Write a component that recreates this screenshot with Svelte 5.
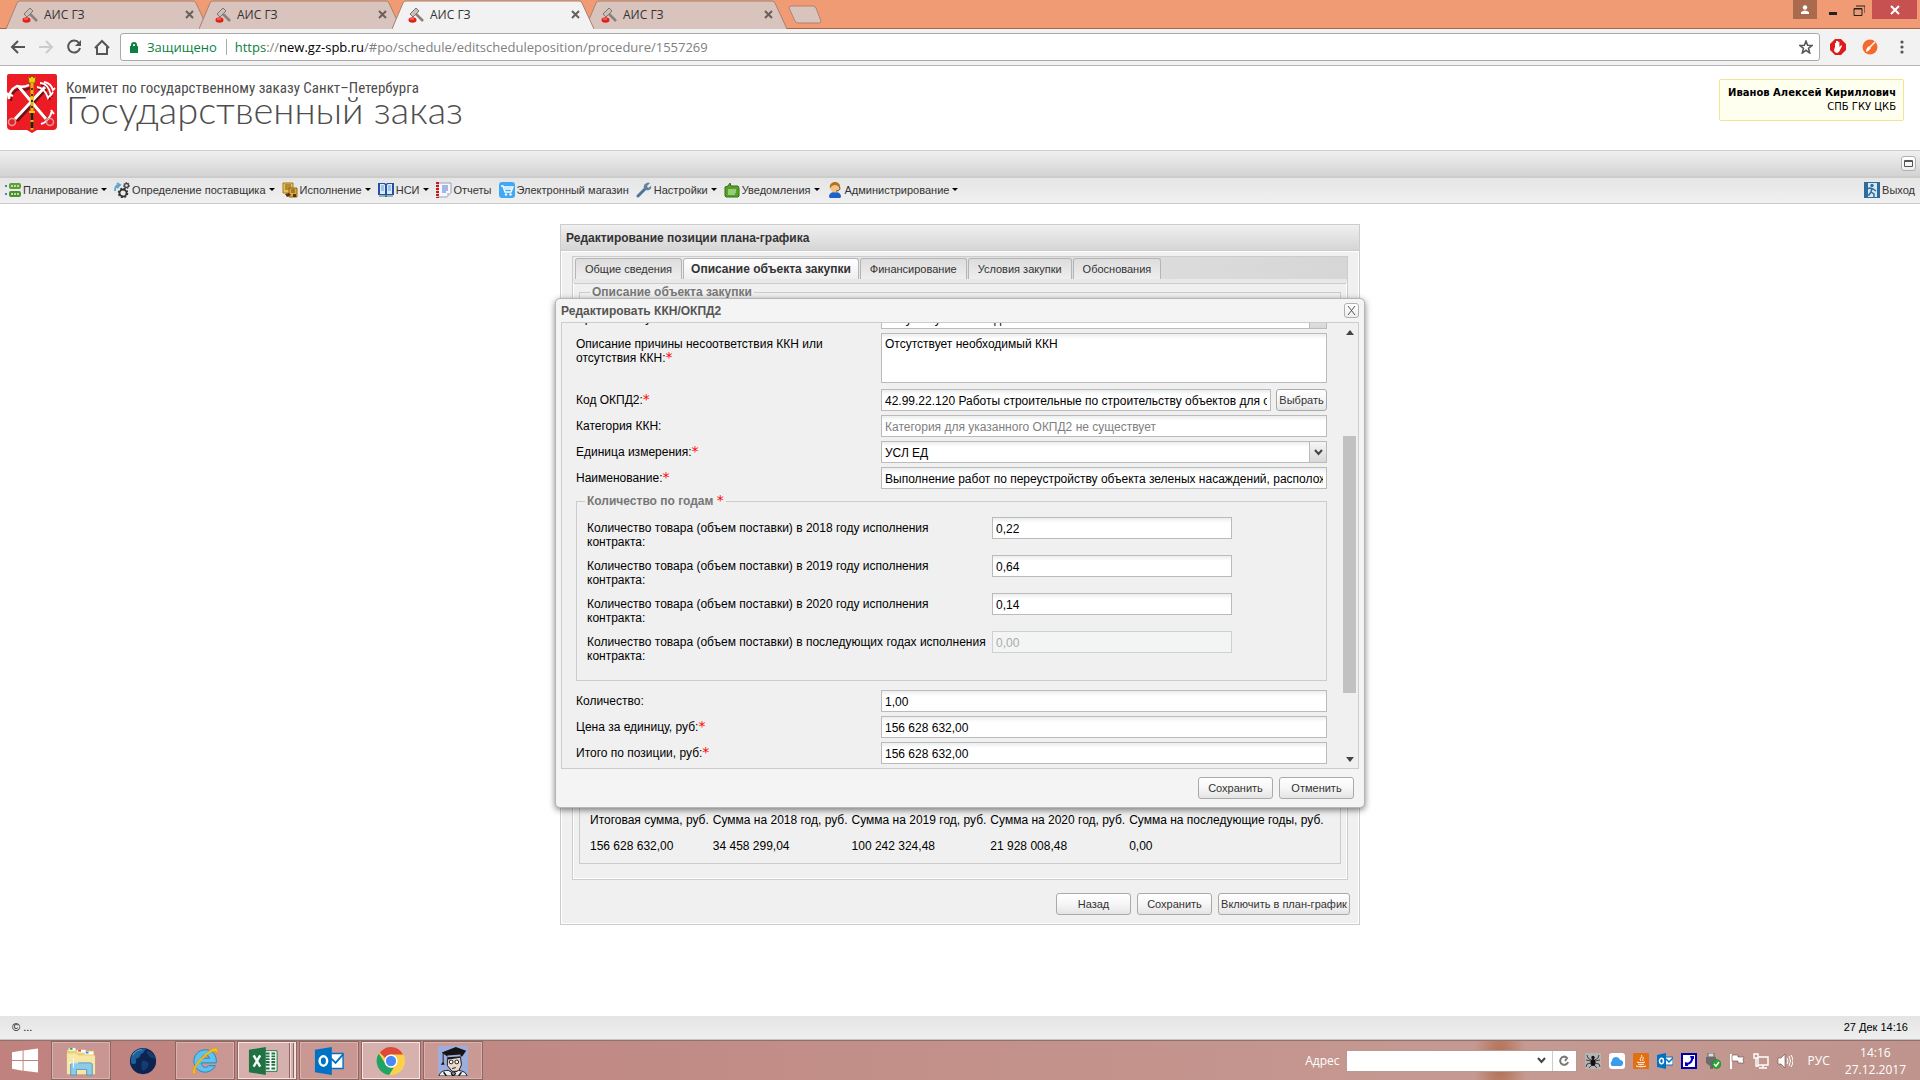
<script>
  const browserTabs = [
    { title: "АИС ГЗ", active: false },
    { title: "АИС ГЗ", active: false },
    { title: "АИС ГЗ", active: true },
    { title: "АИС ГЗ", active: false },
  ];

  const menu = [
    { icon: "plan", label: "Планирование", caret: true },
    { icon: "gears", label: "Определение поставщика", caret: true },
    { icon: "notes", label: "Исполнение", caret: true },
    { icon: "book", label: "НСИ", caret: true },
    { icon: "report", label: "Отчеты", caret: false },
    { icon: "cart", label: "Электронный магазин", caret: false },
    { icon: "wrench", label: "Настройки", caret: true },
    { icon: "mail", label: "Уведомления", caret: true },
    { icon: "person", label: "Администрирование", caret: true },
  ];

  const formTabs = [
    "Общие сведения",
    "Описание объекта закупки",
    "Финансирование",
    "Условия закупки",
    "Обоснования",
  ];
  let activeTab = $state(1);

  const totals = [
    { name: "Итоговая сумма, руб.", value: "156 628 632,00" },
    { name: "Сумма на 2018 год, руб.", value: "34 458 299,04" },
    { name: "Сумма на 2019 год, руб.", value: "100 242 324,48" },
    { name: "Сумма на 2020 год, руб.", value: "21 928 008,48" },
    { name: "Сумма на последующие годы, руб.", value: "0,00" },
  ];

  let years = $state([
    { id: "y2018", period: "в 2018 году", value: "0,22", disabled: false },
    { id: "y2019", period: "в 2019 году", value: "0,64", disabled: false },
    { id: "y2020", period: "в 2020 году", value: "0,14", disabled: false },
    { id: "yNext", period: "в последующих годах", value: "0,00", disabled: true },
  ]);

  let form = $state({
    mismatch: "Отсутствует необходимый ККН",
    okpd: "42.99.22.120 Работы строительные по строительству объектов для отдыха",
    name: "Выполнение работ по переустройству объекта зеленых насаждений, расположенного по адресу",
    count: "1,00",
    price: "156 628 632,00",
    total: "156 628 632,00",
  });

  const apps = ["explorer", "globe", "ie", "excel", "outlook", "chrome", "scholar"];
  const tray = ["spider", "cloud", "java", "mailbox", "phone", "usb", "flag", "network", "sound"];
</script>

{#snippet menuIcon(name)}
  <svg class="ico" viewBox="0 0 16 16" aria-hidden="true">
    {#if name === "plan"}
      <rect x="4" y="1" width="12" height="6" rx="2" fill="#5a9e3e" />
      <rect x="4" y="9" width="12" height="6" rx="2" fill="#4a8f33" />
      <path d="M6 4h2m1 0h2m1 0h2M6 12h2m1 0h2m1 0h2" stroke="#b9e29f" stroke-width="2" />
      <path d="M0 4h2M0 12h2" stroke="#4a7fae" stroke-width="2" />
    {:else if name === "gears"}
      <circle cx="9" cy="11" r="3.500" fill="none" stroke="#333" stroke-width="1.800" />
      <circle cx="9" cy="11" r="4.700" fill="none" stroke="#333" stroke-width="1.200" stroke-dasharray="2 1.700" />
      <circle cx="12.500" cy="3.500" r="2" fill="none" stroke="#444" stroke-width="1.300" />
      <circle cx="12.500" cy="3.500" r="3" fill="none" stroke="#444" stroke-width="1" stroke-dasharray="1.300 1.300" />
      <path d="M1 9c0-4 1-6 4-6M3 1l3 2-3 3" fill="none" stroke="#5ba7cf" stroke-width="1.800" />
    {:else if name === "notes"}
      <path d="M1 1h10v10H1z" fill="#e7bf52" stroke="#a67b20" />
      <path d="M3 3h6M3 5h6M3 7h5" stroke="#7c5a17" />
      <path d="M7 6h8v9H7z" fill="#dca93e" stroke="#8c6418" />
      <path d="M9 8h4M9 10h4" stroke="#6b4a12" />
      <path d="M3 12l4-1 2 2-4 2zM11 12h3v3h-3z" fill="#5a3210" />
    {:else if name === "book"}
      <path d="M0 1h7l1 1 1-1h7v12H9l-1 2-1-2H0z" fill="#2b4fa0" />
      <path d="M2 2h4l1 1v9H2zM14 2h-4L9 3v9h5z" fill="#d9ebff" />
      <path d="M3 4h3M3 6h3M3 8h3M10 4h3M10 6h3M10 8h3" stroke="#6d97cf" />
      <path d="M1 14h6l1 1 1-1h6" fill="none" stroke="#2d8078" />
    {:else if name === "report"}
      <path d="M2 1h13v10l-4 4H2z" fill="#f4f7ff" stroke="#9aa0b4" />
      <path d="M1.500 0v16" stroke="#cf1515" stroke-width="3" stroke-dasharray="2 1" />
      <path d="M6 4h6M6 6h6M6 8h6M6 10h4" stroke="#5577c5" />
      <path d="M11 15v-4h4z" fill="#c6cde2" />
    {:else if name === "cart"}
      <rect width="16" height="16" rx="3" fill="#3fa9f5" />
      <path d="M2 4h2l2 6h6l2-5H5M6 7h7" fill="none" stroke="#fff" stroke-width="1.400" />
      <circle cx="7" cy="12.500" r="1.200" fill="#fff" /><circle cx="11.500" cy="12.500" r="1.200" fill="#fff" />
    {:else if name === "wrench"}
      <path d="M2 14l8-8" stroke="#4f7595" stroke-width="3" stroke-linecap="round" />
      <path d="M14 1l-3 3 1 2 3-2c1 3-2 5-5 4L8 6c-1-3 2-6 6-5z" fill="#5e84a4" />
    {:else if name === "mail"}
      <path d="M1 5l3-1 2-3 1 3h7l1 2v8l-1 1H2l-1-1z" fill="#57a12b" stroke="#2f7312" />
      <path d="M4 8h8M4 10h8M4 12h7" stroke="#def3cf" />
    {:else}
      <path d="M2 15c0-4 3-5 6-5s6 1 6 5l-1 1H3z" fill="#1d62c9" />
      <circle cx="8" cy="6" r="4.500" fill="#f3c384" />
      <path d="M3 7C2 2 5 0 8 0s6 2 5 7c-1-3-3-4-5-4S4 4 3 7z" fill="#b4701d" />
      <path d="M12 5c2 1 1 4-3 4" fill="none" stroke="#555" />
    {/if}
  </svg>
{/snippet}

{#snippet appIcon(name)}
  <svg class="app-ico" viewBox="0 0 32 32" aria-hidden="true">
    {#if name === "explorer"}
      <path d="M1 5l2-2h7l2 2h18v24H1z" fill="#e9cf76" />
      <path d="M3 2h7v3H3z" fill="#fff" /><path d="M4 2h3v2H4z" fill="#3ca94b" />
      <path d="M12 4h9v3h-9z" fill="#fff" /><path d="M13 4h3v2h-3z" fill="#d94b3a" />
      <path d="M20 6h9v3h-9z" fill="#fff" /><path d="M21 6h3v2h-3z" fill="#2d8fe0" />
      <path d="M1 8h10l2 2h18v20H1z" fill="#f7e7a4" />
      <path d="M5 31V20q0-2 2-2h19q2 0 2 2v11h-6v-6H11v6z" fill="#8fcbe8" stroke="#4c9cc7" />
      <path d="M8 13v10M3 18h10" stroke="#fff" />
    {:else if name === "globe"}
      <circle cx="16" cy="16" r="14" fill="#0d2350" />
      <path d="M3 14C4 6 12 1 20 3c-3 1-2 4-5 5s-1 4-5 5 1 5-3 6-4-2-4-5z" fill="#1b5f9b" />
      <path d="M20 5c4 0 8 4 9 8-3 1-6-1-7-3s-3-3-2-5zM15 16c3-1 8 1 7 4s-4 7-6 6-2-8-1-10z" fill="#143d74" />
      <path d="M5 10c2-4 6-6 10-6" stroke="#4fa8dd" fill="none" />
    {:else if name === "ie"}
      <path d="M16 4a12 12 0 1 0 11 17h-7c-2 3-8 2-8-3h16C29 9 23 4 16 4zm-4 9c1-4 8-4 9 0z" fill="#5fc3ee" stroke="#1d86c0" />
      <path d="M6 29c-5 3-4-5 3-13S26-1 29 3c1 2 0 4-1 6 1-5-4-4-9 0S3 23 6 29z" fill="#f5c21c" stroke="#d99a08" stroke-width=".6" />
    {:else if name === "excel"}
      <path d="M17 5h14v22H17z" fill="#fff" stroke="#207245" />
      <path d="M19 8h4M25 8h4M19 11h4M25 11h4M19 14h4M25 14h4M19 17h4M25 17h4M19 20h4M25 20h4M19 24h4M25 24h4" stroke="#207245" stroke-width="2" />
      <path d="M1 4l18-3v30L1 28z" fill="#207245" />
      <path d="M6 10l7 12M13 10L6 22" stroke="#fff" stroke-width="2.500" />
    {:else if name === "outlook"}
      <path d="M17 8h14v16H17z" fill="#fff" stroke="#0072c6" stroke-width="1.500" />
      <path d="M18 13l5 5 8-9" fill="none" stroke="#0072c6" stroke-width="2" />
      <path d="M1 4l18-3v30L1 28z" fill="#0072c6" />
      <ellipse cx="10" cy="16" rx="4" ry="5" fill="none" stroke="#fff" stroke-width="2.600" />
    {:else if name === "chrome"}
      <circle cx="16" cy="16" r="15" fill="#fbd04b" />
      <path d="M16 1a15 15 0 0 1 13 8H16a7 7 0 0 0-6 4L4 7a15 15 0 0 1 12-6z" fill="#dc4a3d" />
      <path d="M3 8l7 11c2 4 6 5 9 4l-5 8A15 15 0 0 1 3 8z" fill="#1fa463" />
      <circle cx="16" cy="16" r="7" fill="#fff" /><circle cx="16" cy="16" r="5.500" fill="#4a8af4" />
    {:else}
      <path d="M0 0h32v32H0z" fill="#9daede" />
      <path d="M4 7L19 1l11 4-4 6-15 1zM10 10v4l14-2v-3z" fill="#151515" />
      <path d="M5 7v10l-2 3h4l-1-3V8z" fill="#151515" />
      <path d="M10 14l14-2 1 8-3 7h-7l-5-6z" fill="#ead9cc" stroke="#111" />
      <circle cx="14" cy="17" r="2" fill="#fff" stroke="#111" /><circle cx="20" cy="17" r="2" fill="#fff" stroke="#111" />
      <path d="M15 24l4-1" stroke="#111" />
      <path d="M1 32c1-5 6-6 10-6l5 3 6-3c5 1 8 2 9 6z" fill="#eee" stroke="#111" />
      <path d="M14 29l2 3 3-3M6 28l3 4M25 28l-3 4" stroke="#111" fill="none" stroke-width="1.500" />
    {/if}
  </svg>
{/snippet}

{#snippet trayIcon(name)}
  <svg class="ico" viewBox="0 0 16 16" aria-hidden="true">
    {#if name === "spider"}
      <rect width="16" height="16" rx="1" fill="#b4b4b4" />
      <ellipse cx="8" cy="9.500" rx="2.500" ry="3.500" fill="#111" /><circle cx="8" cy="4.500" r="1.700" fill="#111" />
      <path d="M6 7L3 5 2 2M10 7l3-2 1-3M6 8L1 7M10 8l5-1M6 10l-4 1-1 3M10 10l4 1 1 3M7 12l-3 3M9 12l3 3" stroke="#222" fill="none" stroke-width=".8" />
    {:else if name === "cloud"}
      <rect width="16" height="16" rx="3" fill="#fff" />
      <path d="M3 13a3 3 0 0 1 0-5c0-5 7-5 8-1 4 0 4 5 1 6z" fill="#3d9bef" />
    {:else if name === "java"}
      <rect width="16" height="16" rx="1" fill="#e46f13" />
      <path d="M8 2c3 2-3 3 0 6M10 4c1 1-1 2 0 4M4 9c2 1 6 1 8 0M5 11c2 1 4 1 6 0M3 13c3 1 7 1 10 0" stroke="#fff" fill="none" />
    {:else if name === "mailbox"}
      <path d="M8 4h8v8H8z" fill="#fff" stroke="#0072c6" /><path d="M9 6l3 3 4-4" stroke="#0072c6" fill="none" stroke-width="1.500" />
      <path d="M0 2l9-2v16l-9-2z" fill="#0072c6" />
      <ellipse cx="4.500" cy="8" rx="2" ry="2.700" fill="none" stroke="#fff" stroke-width="1.500" />
    {:else if name === "phone"}
      <rect x="1" y="1" width="14" height="14" fill="#fff" stroke="#0000a8" stroke-width="2" />
      <path d="M11 4c1 4-2 7-6 7" fill="none" stroke="#0000c0" stroke-width="2" />
      <path d="M9 3h4v3h-3zM4 9l3 1v3H4z" fill="#0000c0" />
    {:else if name === "usb"}
      <path d="M3 0h6v4H3z" fill="#ddd" stroke="#666" /><path d="M1 4h10v6l-3 3v3H5v-3l-4-3z" fill="#6c6c6c" />
      <circle cx="11.500" cy="11" r="4.500" fill="#2da336" stroke="#1a7a22" stroke-width=".5" />
      <path d="M9 11l2 2 3-4" stroke="#fff" fill="none" stroke-width="1.500" />
    {:else if name === "flag"}
      <path d="M2 1v15" stroke="#fff" stroke-width="2" />
      <path d="M3 2h6v2h6l-1 3 1 3H9V8H3z" fill="#fff" stroke="#6b4a46" stroke-width=".6" />
    {:else if name === "network"}
      <path d="M5 4h10v8H5zM10 12v3M6 15h8M1 1h4v4H1zM3 5v8h3" fill="none" stroke="#fff" stroke-width="1.400" />
    {:else}
      <path d="M1 5h3l4-4v14l-4-4H1z" fill="#fff" stroke="#6b4a46" stroke-width=".6" />
      <path d="M10 5q2 3 0 6M12 3q3 5 0 10M14 2q4 6 0 12" fill="none" stroke="#fff" />
    {/if}
  </svg>
{/snippet}

<div class="screen">
  <div class="tabstrip">
    {#each browserTabs as tab}
      <div class="btab" class:active={tab.active}>
        <svg class="btab-shape" viewBox="0 0 202 29" preserveAspectRatio="none" aria-hidden="true">
          <path d="M0 29L11 3Q12 1 14 1H187Q189 1 190 3L202 29" />
        </svg>
        <svg class="ico" viewBox="0 0 16 16" aria-hidden="true">
          <path d="M7 6l8 8" stroke="#8b7f7a" stroke-width="2.500" />
          <path d="M2 7l6-6 3 3-6 6z" fill="#c9c0bc" stroke="#7d726e" />
          <ellipse cx="4.500" cy="13" rx="4" ry="2.700" fill="#e0211b" />
          <path d="M2 12h4" stroke="#ff8f88" />
        </svg>
        <span>{tab.title}</span>
        <button class="btab-close" aria-label="Закрыть вкладку">
          <svg viewBox="0 0 9 9"><path d="M1 1l7 7M8 1L1 8" /></svg>
        </button>
      </div>
    {/each}
    <button class="btab-new" aria-label="Новая вкладка">
      <svg viewBox="0 0 34 19"><path d="M3 1H25Q27 1 28 3L33 16Q33 18 31 18H10Q8 18 7 16L1 3Q1 1 3 1Z" /></svg>
    </button>
    <div class="win-controls">
      <button class="profile" aria-label="Профиль">
        <svg viewBox="0 0 10 10"><circle cx="5" cy="2.500" r="2.200" /><path d="M1 9V7q4-3 8 0v2z" /></svg>
      </button>
      <button class="win" aria-label="Свернуть">
        <svg viewBox="0 0 12 12"><path d="M2 9.500h8" stroke-width="3" /></svg>
      </button>
      <button class="win" aria-label="Развернуть">
        <svg viewBox="0 0 12 12"><path d="M1 4.500h8v7H1zM1 5h8M3 2h9v7" /></svg>
      </button>
      <button class="win win-close" aria-label="Закрыть">
        <svg viewBox="0 0 12 12"><path d="M2 2l8 8M10 2l-8 8" stroke-width="2" /></svg>
      </button>
    </div>
  </div>

  <div class="navbar">
    <button class="nav" aria-label="Назад"><svg viewBox="0 0 16 16"><path d="M15 8H2M8 2L2 8l6 6" /></svg></button>
    <button class="nav off" aria-label="Вперёд"><svg viewBox="0 0 16 16"><path d="M1 8h13M8 2l6 6-6 6" /></svg></button>
    <button class="nav" aria-label="Обновить"><svg viewBox="0 0 16 16"><path d="M13 4a6 6 0 1 0 1 5" /><path d="M15 1v6H9z" class="solid" /></svg></button>
    <button class="nav" aria-label="Домой"><svg viewBox="0 0 16 16"><path d="M1 9l7-7 7 7M3 8v7h10V8" /></svg></button>
    <div class="omnibox">
      <svg class="lock" viewBox="0 0 8 11" aria-hidden="true"><path d="M2 5V3q0-2 2-2t2 2v2" /><rect y="4" width="8" height="7" /></svg>
      <span class="secure">Защищено</span>
      <div class="url" role="textbox" tabindex="0" aria-label="Адресная строка"><span class="scheme">https</span>://<b>new.gz-spb.ru</b>/#po/schedule/editscheduleposition/procedure/1557269</div>
      <svg class="star" viewBox="0 0 14 14" aria-hidden="true"><path d="M7 1l1.600 4.300 4.400.2-3.500 2.800L10.700 13 7 10.300 3.300 13l1.200-4.700L1 5.500l4.400-.2z" /></svg>
    </div>
    <svg class="ico" viewBox="0 0 16 16" aria-hidden="true">
      <path d="M5 0h6l5 5v6l-5 5H5l-5-5V5z" fill="#e01b1b" />
      <path d="M5 8V4h1v3V2h1v5V2h1.200v5V3h1.200v5l2-2 .6 1-2.500 5q-1 2-3 2-2.500-1-2.500-3z" fill="#fff" />
    </svg>
    <svg class="ico" viewBox="0 0 16 16" aria-hidden="true">
      <circle cx="8" cy="8" r="7.500" fill="#f4692c" />
      <path d="M13 3L8 8" stroke="#fff" stroke-width="1.500" />
      <path d="M7 7l2 2q-2 3-5 4 0-4 3-6z" fill="#fff" />
    </svg>
    <svg class="dots" viewBox="0 0 4 14" aria-hidden="true"><circle cx="2" cy="2" r="1.600" /><circle cx="2" cy="7" r="1.600" /><circle cx="2" cy="12" r="1.600" /></svg>
  </div>

  <header>
    <div class="brand">
      <svg class="emblem" viewBox="0 0 50 59" aria-hidden="true">
        <path d="M2 0h46q2 0 2 2v50q0 4-4 4H30l-5 3-5-3H4q-4 0-4-4V2q0-2 2-2z" fill="#ed1c24" />
        <g fill="none" stroke="#6b1013" stroke-width="3" transform="translate(1 2)">
          <path d="M13 13l27 32M38 13L9 45" />
          <path d="M3 25q0-9 7-12 6 2 12-1M33 9q8 0 11 12M30 13q9 1 12 11" stroke-width="2" />
        </g>
        <g fill="none" stroke="#fff">
          <path d="M12 13l27 32M38 13L8 45" stroke-width="3" />
          <path d="M2 25q0-9 8-13 6 2 12-1M2 25l-1-5 5 2" stroke-width="2.400" />
          <path d="M33 9q8 0 11 12l2-3M30 13q8 1 11 11l2-3M37 8q7 1 9 8l2-2" stroke-width="1.800" />
          <path d="M34 50q8-2 11-13M44 36l3 4" stroke-width="2" />
        </g>
        <circle cx="5" cy="48" r="3.500" fill="none" stroke="#d99a9a" stroke-width="1.500" />
        <circle cx="43" cy="48" r="3.500" fill="none" stroke="#d99a9a" stroke-width="1.500" />
        <path d="M21 2l2 2 2-2 2 2 2-2-1 7h-6z" fill="#f6c915" stroke="#7b5b00" stroke-width=".8" />
        <path d="M25 9v47" stroke="#e5b30f" stroke-width="3" />
        <path d="M25 14v42" stroke="#4a3305" stroke-width="2" stroke-dasharray="2 4" />
        <path d="M25 39v15" stroke="#2b1c05" stroke-width="3" stroke-dasharray="7 2" />
        <path d="M23 24h4M22 38h6" stroke="#f6c915" stroke-width="2" />
      </svg>
      <div class="brand-text">
        <p class="committee">Комитет по государственному заказу Санкт–Петербурга</p>
        <h1>Государственный заказ</h1>
      </div>
    </div>
    <div class="user">
      <strong>Иванов Алексей Кириллович</strong>
      <span>СПБ ГКУ ЦКБ</span>
    </div>
  </header>

  <div class="band">
    <button class="tool" aria-label="Развернуть панель">
      <svg viewBox="0 0 9 7"><path d="M.5.500h8v6h-8zM0 1.500h9" /></svg>
    </button>
  </div>

  <nav class="menubar">
    {#each menu as item}
      <button class="menu-item">
        {@render menuIcon(item.icon)}
        <span>{item.label}</span>
        {#if item.caret}<i class="caret"></i>{/if}
      </button>
    {/each}
    <button class="menu-item exit">
      <svg class="ico" viewBox="0 0 16 16" aria-hidden="true">
        <path d="M0 0h16v16H0z" fill="#2f6c9c" />
        <path d="M4 1h9v14H4z" fill="#d7e8f5" />
        <circle cx="8" cy="3.500" r="1.700" fill="#2f6c9c" />
        <path d="M2 7l4-1 3 1 3 2M8 6l-1 4 3 2v4M7 10l-2 3H1" fill="none" stroke="#2f6c9c" stroke-width="1.500" />
      </svg>
      <span>Выход</span>
    </button>
  </nav>

  <main>
    <section class="panel">
      <h2>Редактирование позиции плана-графика</h2>
      <div class="panel-body">
        <div class="tabpanel">
          <div class="form-tabs" role="tablist">
            {#each formTabs as tab, i}
              <button role="tab" aria-selected={i === activeTab} class:active={i === activeTab} onclick={() => (activeTab = i)}>{tab}</button>
            {/each}
          </div>
          <div class="tab-body">
            <fieldset class="object">
              <legend>Описание объекта закупки</legend>
              <table class="totals">
                <thead>
                  <tr>{#each totals as t}<th>{t.name}</th>{/each}</tr>
                </thead>
                <tbody>
                  <tr>{#each totals as t}<td>{t.value}</td>{/each}</tr>
                </tbody>
              </table>
            </fieldset>
          </div>
        </div>
        <div class="buttons">
          <button class="btn">Назад</button>
          <button class="btn">Сохранить</button>
          <button class="btn wide">Включить в план-график</button>
        </div>
      </div>

      <div class="dialog" role="dialog" aria-labelledby="dlg-title">
        <div class="dialog-head">
          <h3 id="dlg-title">Редактировать ККН/ОКПД2</h3>
          <button class="tool" aria-label="Закрыть окно">
            <svg viewBox="0 0 9 9"><path d="M1 0l7 9M8 0L1 9" /></svg>
          </button>
        </div>
        <div class="dialog-body">
          <div class="fields">
            <div class="row">
              <label for="reason">Причина отсутствия ККН:<em>*</em></label>
              <div class="combo">
                <select id="reason"><option>Отсутствует необходимый ККН</option></select>
                <span class="trigger"></span>
              </div>
            </div>
            <div class="row tall">
              <label for="mismatch">Описание причины несоответствия ККН или отсутствия ККН:<em>*</em></label>
              <textarea id="mismatch" bind:value={form.mismatch}></textarea>
            </div>
            <div class="row">
              <label for="okpd">Код ОКПД2:<em>*</em></label>
              <input id="okpd" type="text" bind:value={form.okpd} />
              <button class="btn pick">Выбрать</button>
            </div>
            <div class="row">
              <label for="category">Категория ККН:</label>
              <input id="category" type="text" placeholder="Категория для указанного ОКПД2 не существует" />
            </div>
            <div class="row">
              <label for="unit">Единица измерения:<em>*</em></label>
              <div class="combo">
                <select id="unit"><option>УСЛ ЕД</option></select>
                <span class="trigger"><svg viewBox="0 0 9 7"><path d="M1 1l3.500 4L8 1" /></svg></span>
              </div>
            </div>
            <div class="row">
              <label for="name">Наименование:<em>*</em></label>
              <input id="name" type="text" bind:value={form.name} />
            </div>

            <fieldset class="years">
              <legend>Количество по годам <em>*</em></legend>
              {#each years as y}
                <div class="year">
                  <label for={y.id}>Количество товара (объем поставки) {y.period} исполнения контракта:</label>
                  <input id={y.id} type="text" bind:value={y.value} disabled={y.disabled} />
                </div>
              {/each}
            </fieldset>

            <div class="row">
              <label for="count">Количество:</label>
              <input id="count" type="text" bind:value={form.count} />
            </div>
            <div class="row">
              <label for="price">Цена за единицу, руб:<em>*</em></label>
              <input id="price" type="text" bind:value={form.price} />
            </div>
            <div class="row">
              <label for="total">Итого по позиции, руб:<em>*</em></label>
              <input id="total" type="text" bind:value={form.total} />
            </div>
          </div>
          <div class="scrollbar" aria-hidden="true">
            <i class="up"></i>
            <div class="track"><div class="thumb"></div></div>
            <i class="down"></i>
          </div>
        </div>
        <div class="dialog-foot">
          <button class="btn">Сохранить</button>
          <button class="btn">Отменить</button>
        </div>
      </div>
    </section>
  </main>

  <footer>
    <span>© ...</span>
    <span>27 Дек 14:16</span>
  </footer>

  <div class="taskbar">
    <button class="start" aria-label="Пуск">
      <svg viewBox="0 0 28 26"><path d="M0 4l11-2v10H0zM12 2l15-2v12H12zM0 13h11v10L0 21zM12 13h15v12l-15-2z" /></svg>
    </button>
    {#each apps as app}
      <button class="app {app}" aria-label={app}>{@render appIcon(app)}</button>
    {/each}
    <label class="addr-label" for="addr">Адрес</label>
    <div class="addr">
      <input id="addr" type="text" />
      <svg viewBox="0 0 9 9" class="chev" aria-hidden="true"><path d="M1 2l3.500 4L8 2" /></svg>
      <button aria-label="Обновить"><svg viewBox="0 0 12 12"><path d="M9 3a4 4 0 1 0 1 4M6 1l3 2-2 3" /></svg></button>
    </div>
    <div class="tray">
      {#each tray as t}{@render trayIcon(t)}{/each}
    </div>
    <span class="lang">РУС</span>
    <div class="clock"><span>14:16</span><span>27.12.2017</span></div>
  </div>
</div>

<style>
  :global(body) {
    margin: 0;
    background: #fff;
  }

  .screen {
    display: flex;
    flex-direction: column;
    min-height: 100vh;
    font: 12px/14px "Liberation Sans", Arial, sans-serif;
    color: #000;
  }

  .screen * {
    box-sizing: border-box;
  }

  button {
    font: inherit;
    color: inherit;
    border: 0;
    background: none;
    padding: 0;
    cursor: pointer;
  }

  svg {
    display: block;
    flex: none;
  }

  .ico {
    width: 16px;
    height: 16px;
  }

  em {
    color: #f00;
    font: 14px/1px "DejaVu Sans", sans-serif;
  }

  /* browser window */
  .tabstrip {
    display: flex;
    height: 29px;
    padding-left: 6px;
    background: #f19b75;
    box-shadow: inset 0 -1px #a8654b;
    font: 12px/16px "Open Sans", sans-serif;
  }

  .btab {
    position: relative;
    display: flex;
    align-items: center;
    gap: 6px;
    width: 202px;
    margin-right: -9px;
    padding: 0 14px 0 16px;
    color: #333;
  }

  .btab.active {
    z-index: 1;
  }

  .btab span {
    flex: 1;
    z-index: 1;
  }

  .btab .ico {
    z-index: 1;
  }

  .btab-shape {
    position: absolute;
    inset: 0;
    width: 100%;
    height: 100%;
    fill: #d8c4bd;
    stroke: #a8806f;
  }

  .active .btab-shape {
    fill: #f2f2f2;
  }

  .btab-close {
    z-index: 1;
  }

  .btab-close svg {
    width: 9px;
    height: 9px;
    stroke: #6a5f5b;
    stroke-width: 2;
  }

  .btab-new {
    margin: 0 0 0 10px;
  }

  .btab-new svg {
    width: 34px;
    height: 19px;
    fill: #d8c4bd;
    stroke: #b08070;
  }

  .win-controls {
    display: flex;
    align-items: flex-start;
    margin-left: auto;
    padding-right: 3px;
  }

  .profile {
    display: grid;
    place-items: center;
    width: 24px;
    height: 19px;
    margin-right: 3px;
    background: #a96a4d;
    fill: #fff;
  }

  .profile svg {
    width: 10px;
    height: 10px;
  }

  .win {
    display: grid;
    place-items: center;
    width: 26px;
    height: 19px;
    stroke: #222;
    fill: none;
  }

  .win svg {
    width: 12px;
    height: 12px;
  }

  .win-close {
    width: 45px;
    background: #c75050;
    stroke: #fff;
  }

  .navbar {
    display: flex;
    align-items: center;
    height: 37px;
    padding: 0 16px 0 10px;
    gap: 12px;
    background: #f2f2f2;
    border-bottom: 1px solid #b6b4b6;
    font: 13px/18px "Open Sans", sans-serif;
  }

  .nav svg {
    width: 16px;
    height: 16px;
    fill: none;
    stroke: #555;
    stroke-width: 2;
  }

  .nav .solid {
    fill: #555;
    stroke: none;
  }

  .nav.off svg {
    stroke: #ccc;
  }

  .omnibox {
    display: flex;
    flex: 1;
    align-items: center;
    height: 28px;
    margin: 0 -2px;
    padding: 0 6px 0 9px;
    border: 1px solid #a9a9a9;
    border-radius: 3px;
    background: #fff;
  }

  .lock {
    width: 8px;
    height: 11px;
    fill: #0b8043;
    stroke: none;
  }

  .lock path {
    fill: none;
    stroke: #0b8043;
    stroke-width: 2;
  }

  .secure {
    margin-left: 9px;
    padding-right: 9px;
    color: #0b8043;
    border-right: 1px solid #aaa;
    line-height: 16px;
  }

  .url {
    flex: 1;
    padding-left: 8px;
    color: #808080;
  }

  .url b {
    color: #000;
    font-weight: 400;
  }

  .scheme {
    color: #0b8043;
  }

  .star {
    width: 14px;
    height: 14px;
    fill: none;
    stroke: #555;
    stroke-width: 1.500;
  }

  .navbar > .ico {
    margin-right: 4px;
  }

  .dots {
    width: 4px;
    height: 14px;
    margin-left: 6px;
    fill: #555;
  }

  /* site header */
  header {
    display: flex;
    justify-content: space-between;
    align-items: flex-start;
    height: 84px;
    padding: 8px 16px 0 7px;
  }

  .brand {
    display: flex;
    gap: 9px;
  }

  .emblem {
    width: 50px;
    height: 59px;
  }

  .brand-text {
    color: #4d4d4d;
  }

  .committee {
    margin: 4px 0 0;
    font: 15px/20px "Roboto Condensed", "Open Sans Condensed", "Open Sans", sans-serif;
  }

  h1 {
    margin: 0;
    font: 300 38px/22px Lato, "Open Sans", sans-serif;
  }

  .user {
    display: flex;
    flex-direction: column;
    align-items: flex-end;
    margin-top: 5px;
    padding: 6px 7px 6px 8px;
    border: 1px solid #f3e493;
    border-radius: 2px;
    background: #fffff0;
    font: 10px/14px Verdana, "DejaVu Sans", sans-serif;
  }

  .band {
    display: flex;
    justify-content: flex-end;
    align-items: center;
    height: 28px;
    padding-right: 4px;
    border: 1px solid #ccc;
    border-width: 1px 0 2px;
    background: linear-gradient(#f0f0f0, #d3d3d3);
  }

  .tool {
    display: grid;
    place-items: center;
    width: 15px;
    height: 15px;
    border: 1px solid #b0b0b0;
    border-radius: 3px;
    background: linear-gradient(#fff, #eee);
  }

  .tool svg {
    width: 9px;
    height: 9px;
    fill: none;
    stroke: #555;
  }

  .menubar {
    display: flex;
    align-items: center;
    height: 26px;
    padding: 0 5px 2px;
    gap: 7px;
    border-bottom: 1px solid #ccc;
    background: linear-gradient(#e5e5e5, #f0f0f0);
    font-size: 11px;
    color: #333;
  }

  .menu-item {
    display: flex;
    align-items: center;
    gap: 2px;
  }

  .caret {
    border: 3px solid transparent;
    border-top-color: #000;
    border-bottom: 0;
    margin-left: 1px;
  }

  .exit {
    margin-left: auto;
  }

  /* edit form */
  main {
    flex: 1;
    padding-top: 20px;
  }

  .panel {
    position: relative;
    width: 800px;
    max-width: 100%;
    margin: 0 auto;
    border: 1px solid #ccc;
    background: #f0f0f0;
  }

  h2 {
    margin: 0;
    padding: 6px 5px 4px;
    border-bottom: 1px solid #ccc;
    background: linear-gradient(#f0f0f0, #d5d5d5);
    font-size: 12px;
    line-height: 15px;
    color: #333;
  }

  .panel-body {
    padding: 4px 10px 8px;
    border: 1px solid #fff;
  }

  .tabpanel {
    border: 1px solid #ccc;
  }

  .form-tabs {
    display: flex;
    gap: 1px;
    padding: 1px 2px 0;
    border-bottom: 4px solid #e8e8e8;
    background: linear-gradient(90deg, #eee, #d6d6d6);
    box-shadow: 0 1px #ccc;
  }

  .form-tabs button {
    padding: 3px 9px 2px;
    border: 1px solid #b5b5b5;
    border-bottom: 0;
    border-radius: 3px 3px 0 0;
    background: linear-gradient(#ddd, #eee);
    color: #333;
    font-size: 11px;
    line-height: 15px;
  }

  .form-tabs button.active {
    padding: 3px 7px 2px;
    background: linear-gradient(#fff, #eee);
    font-size: 12px;
    font-weight: bold;
  }

  .tab-body {
    padding: 2px 5px 14px;
    border: 1px solid #fff;
    border-top: 0;
  }

  fieldset {
    margin: 0;
    border: 1px solid #ccc;
    min-width: 0;
  }

  legend {
    font-weight: bold;
    color: #777;
  }

  .object {
    display: flex;
    align-items: flex-end;
    height: 579px;
    padding: 0 10px 4px;
  }

  .object legend {
    padding: 0 2px;
  }

  .totals {
    border-collapse: collapse;
    text-align: left;
  }

  .totals th {
    padding: 6px 4px 6px 0;
    font-weight: normal;
    white-space: nowrap;
  }

  .totals td {
    padding: 6px 4px 6px 0;
  }

  .buttons {
    display: flex;
    justify-content: flex-end;
    gap: 6px;
    margin-right: -2px;
    padding-top: 13px;
  }

  .btn {
    min-width: 75px;
    height: 22px;
    padding: 0 2px;
    border: 1px solid #aaa;
    border-radius: 3px;
    background: linear-gradient(#fff, #f6f6f6 50%, #e4e4e4);
    color: #333;
    font-size: 11px;
    white-space: nowrap;
  }

  .btn.pick {
    min-width: 51px;
    margin-left: 5px;
  }

  .btn.wide {
    min-width: 132px;
  }

  /* dialog over the form */
  .dialog {
    position: absolute;
    top: 73px;
    left: -6px;
    right: -6px;
    border: 1px solid #b5b5b5;
    border-radius: 5px;
    background: #f4f4f4;
    box-shadow: 0 2px 6px rgba(0, 0, 0, 0.5);
    padding: 0 5px;
  }

  .dialog-head {
    display: flex;
    justify-content: space-between;
    align-items: center;
    height: 23px;
  }

  h3 {
    margin: 0;
    font-size: 12px;
    color: #555;
  }

  .dialog-body {
    display: flex;
    height: 447px;
    border: 1px solid #ccc;
    background: #f0f0f0;
  }

  .fields {
    display: flex;
    flex: 1;
    flex-direction: column;
    justify-content: flex-end;
    gap: 4px;
    overflow: hidden;
    padding: 0 14px 4px;
  }

  .row {
    display: flex;
    flex: none;
    height: 22px;
  }

  .row.tall {
    height: 52px;
    padding-bottom: 2px;
  }

  .row label {
    flex: none;
    width: 305px;
    padding: 4px 50px 0 0;
  }

  input,
  textarea,
  .combo {
    flex: 1;
    min-width: 0;
    height: 22px;
    padding: 2px 3px 0;
    border: 1px solid #bbb;
    border-radius: 0;
    background: linear-gradient(#ebeeee, #fff 5px);
    font: inherit;
    color: #000;
    outline: 0;
  }

  textarea {
    height: 50px;
    padding-top: 3px;
    resize: none;
  }

  input::placeholder {
    color: #808080;
    opacity: 1;
  }

  .combo {
    display: flex;
    padding: 0;
  }

  select {
    flex: 1;
    padding: 1px 3px 0;
    border: 0;
    background: none;
    font: inherit;
    color: #000;
    appearance: none;
  }

  .trigger {
    display: grid;
    place-items: center;
    width: 17px;
    border-left: 1px solid #bbb;
    background: linear-gradient(#f5f5f5, #d8d8d8);
  }

  .trigger svg {
    width: 9px;
    height: 7px;
    fill: none;
    stroke: #444;
    stroke-width: 2;
  }

  .years {
    flex: none;
    height: 187px;
    margin: 1px 0 5px;
    padding: 9px 10px 0;
  }

  .years legend {
    margin-left: -2px;
    padding: 0 2px;
  }

  .year {
    display: flex;
    height: 38px;
  }

  .year label {
    flex: none;
    width: 405px;
    padding: 4px 4px 0 0;
  }

  .year input {
    flex: none;
    width: 240px;
  }

  .year input:disabled {
    border-color: #d0d0d0;
    background: #f3f4f4;
    color: #aaa;
  }

  .scrollbar {
    display: flex;
    flex-direction: column;
    align-items: center;
    width: 17px;
    padding: 7px 0 6px;
  }

  .up,
  .down {
    border: 4px solid transparent;
    border-top: 0;
    border-bottom: 5px solid #444;
  }

  .down {
    border-top: 5px solid #444;
    border-bottom: 0;
  }

  .track {
    flex: 1;
    padding-top: 101px;
  }

  .thumb {
    width: 13px;
    height: 257px;
    background: #c1c1c1;
  }

  .dialog-foot {
    display: flex;
    justify-content: flex-end;
    gap: 6px;
    padding: 8px 5px;
  }

  footer {
    display: flex;
    justify-content: space-between;
    align-items: center;
    height: 24px;
    padding: 0 12px 2px;
    border-bottom: 1px solid #c4c4c4;
    background: linear-gradient(#e4e4e4, #efefef);
    font-size: 11px;
  }

  /* windows taskbar */
  .taskbar {
    display: flex;
    align-items: center;
    height: 40px;
    border-top: 1px solid #92706c;
    background:
      radial-gradient(ellipse 26px 60px at 1500px 20px, rgba(176, 104, 72, 0.9), transparent),
      linear-gradient(90deg, #c0827e, #c18a84 30%, #c59a92 80%, #be948c);
    font: 12px/16px "Open Sans", sans-serif;
    color: #fff;
  }

  .start {
    margin: 0 12px;
  }

  .start svg {
    width: 27px;
    height: 26px;
    fill: #fff;
  }

  .app {
    display: grid;
    place-items: center;
    width: 60px;
    height: 39px;
    margin-right: 2px;
    border: 1px solid #8d6763;
    box-shadow: inset 0 0 0 1px #d8b3ae;
    background: rgba(255, 255, 255, 0.15);
  }

  .app.globe {
    border-color: transparent;
    box-shadow: none;
    background: none;
  }

  .app.excel,
  .app.chrome {
    background: rgba(255, 255, 255, 0.35);
    box-shadow: inset 0 0 0 1px #f5e6e4;
  }

  .app.excel {
    justify-content: start;
    padding-left: 10px;
    background: linear-gradient(90deg, transparent 51px, #8d6763 51px 52px, #f0dcd9 52px 53px, transparent 53px 55px, #8d6763 55px 56px, #f0dcd9 56px 57px, transparent 57px), rgba(255, 255, 255, 0.35);
  }

  .app-ico {
    width: 30px;
    height: 30px;
  }

  .addr-label {
    margin-left: auto;
  }

  .addr {
    display: flex;
    align-items: center;
    width: 231px;
    height: 22px;
    margin: 0 8px 0 6px;
    border: 1px solid #b59a95;
    background: #fff;
  }

  .addr input {
    height: 20px;
    border: 0;
    background: none;
  }

  .chev {
    width: 9px;
    height: 9px;
    margin-right: 6px;
    fill: none;
    stroke: #444;
    stroke-width: 2;
  }

  .addr button {
    display: grid;
    place-items: center;
    width: 24px;
    height: 20px;
    border-left: 1px solid #ccc;
  }

  .addr button svg {
    width: 12px;
    height: 12px;
    fill: none;
    stroke: #777;
    stroke-width: 2;
  }

  .tray {
    display: flex;
    gap: 8px;
  }

  .lang {
    margin: 0 15px;
  }

  .clock {
    display: flex;
    flex-direction: column;
    align-items: center;
    margin-right: 14px;
    line-height: 17px;
  }
</style>
